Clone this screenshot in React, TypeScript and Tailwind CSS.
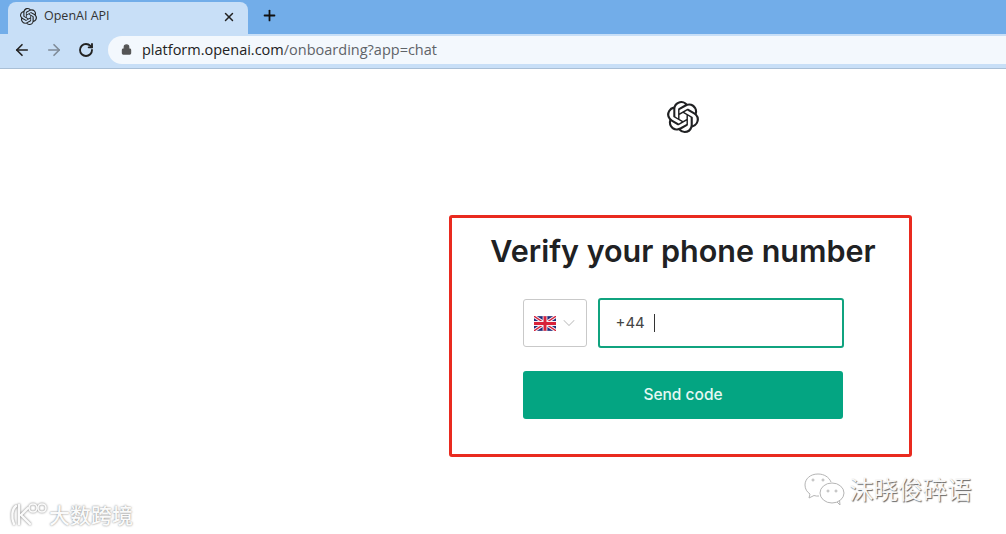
import React from 'react';
import { ArrowLeft, ArrowRight, RotateCw, Lock, X, Plus, ChevronDown } from 'lucide-react';
import { SiOpenai } from 'react-icons/si';

function UkFlag() {
  return (
    <svg width="22" height="15" viewBox="0 0 60 40" className="shrink-0">
      <rect width="60" height="40" fill="#1f2a7a" />
      <path d="M0 0L60 40M60 0L0 40" stroke="#f4eef4" strokeWidth="9" />
      <path d="M0 0L60 40M60 0L0 40" stroke="#d8213a" strokeWidth="3.5" />
      <path d="M30 0V40M0 20H60" stroke="#f4eef4" strokeWidth="13" />
      <path d="M30 0V40M0 20H60" stroke="#d8213a" strokeWidth="8" />
    </svg>
  );
}

function WechatBubbles() {
  return (
    <svg width="42" height="36" viewBox="0 0 42 36" fill="none" stroke="#b5b5b5" strokeWidth="1">
      <path d="M15 3C7 3 2 8 2 14c0 4 2 7 5 9l-1 4 5-2.500c2 .6 3 .7 5 .5" />
      <path d="M15 3c6 0 11 3 13 8" />
      <ellipse cx="29" cy="22" rx="12" ry="10" />
      <path d="M34 31l3 3-.5-5" />
      <circle cx="10" cy="9" r="1" />
      <circle cx="20" cy="9" r="1" />
      <circle cx="25" cy="20" r="1" />
      <circle cx="33" cy="20" r="1" />
    </svg>
  );
}

function KooLogo() {
  return (
    <svg width="38" height="26" viewBox="0 0 38 26" fill="none" className="drop-shadow-[0_0_1px_#777]">
      <g stroke="#fbfbfb" strokeWidth="2.4" strokeLinecap="round">
        <path d="M7 5C3 8 2 16 5 23" />
        <path d="M10 4v19" />
        <path d="M19 7l-7 7 9 9" />
        <circle cx="24" cy="7" r="4" strokeWidth="1.6" />
        <circle cx="33" cy="7" r="4" strokeWidth="1.6" />
      </g>
    </svg>
  );
}

export default function App() {
  return (
    <div className="relative h-[534px] w-[1006px] overflow-hidden bg-white font-['Liberation_Sans',sans-serif]">
      {/* Browser chrome */}
      <div className="flex h-[34px] items-end bg-[#72ade9] pl-2">
        <div className="flex h-[32px] w-[240px] items-center rounded-t-lg bg-[#c8dff7] pb-[3px] pl-3 pr-3">
          <SiOpenai className="h-[17px] w-[17px] text-[#222]" />
          <span className="ml-[7px] font-['Open_Sans',sans-serif] text-[12.5px] text-[#333]">OpenAI API</span>
          <X className="ml-auto h-[14px] w-[14px] text-[#222]" strokeWidth={2.5} />
        </div>
        <Plus className="mb-[10px] ml-[13px] h-[17px] w-[17px] text-[#111]" strokeWidth={2.5} />
      </div>
      <div className="flex h-[35px] items-center border-b border-[#a9bfd6] bg-[#c8dff7] pb-[3px] pl-[13px]">
        <ArrowLeft className="h-[18px] w-[18px] text-[#222]" strokeWidth={2.2} />
        <ArrowRight className="ml-[14px] h-[18px] w-[18px] text-[#7f8b98]" strokeWidth={2.2} />
        <RotateCw className="ml-[15px] h-[16px] w-[16px] text-[#222]" strokeWidth={2.8} />
        <div className="ml-[14px] flex h-[28px] flex-1 items-center rounded-l-full bg-[#f3f8fd] pl-[13px]">
          <Lock className="h-[11px] w-[11px] fill-[#555] text-[#555]" strokeWidth={2.5} />
          <span className="ml-[10px] font-['Open_Sans',sans-serif] text-[14.5px] text-[#5f6368]">
            <span className="text-[#222]">platform.openai.com</span>/onboarding?app=chat
          </span>
        </div>
      </div>

      {/* Page */}
      <main className="flex flex-col items-center pl-[360px] pt-[32px]">
        <SiOpenai className="h-[32px] w-[32px] text-[#202123]" />
        <section className="mr-[5px] mt-[82px] flex h-[242px] w-[463px] flex-col items-center rounded-[3px] border-[3px] border-[#e92a1f] pl-[5px] pt-[15px]">
          <h1 className="whitespace-nowrap font-['Inter',sans-serif] text-[30.5px] font-semibold leading-[36px] text-[#202123]">
            Verify your phone number
          </h1>
          <div className="mt-[29px] flex w-[321px] items-center gap-[11px]">
            <button className="flex h-[48px] w-[64px] items-center gap-[3px] rounded-[3px] border border-[#c9c9c9] bg-white pl-[10px]">
              <UkFlag />
              <ChevronDown className="h-[20px] w-[20px] text-[#c4c4c4]" strokeWidth={1.25} />
            </button>
            <div className="flex h-[50px] flex-1 items-center rounded-[3px] border-2 border-[#10a37f] pl-[16px]">
              <span className="font-['Inter',sans-serif] text-[15px] text-[#444]">+44</span>
              <span className="ml-[9px] h-[18px] w-px bg-[#333]" />
            </div>
          </div>
          <button className="mr-[1px] mt-[23px] h-[48px] w-[320px] rounded-[3px] bg-[#04a582] pl-[1px] font-['Inter',sans-serif] text-[15.5px] font-medium text-[#e6f8f2]">
            Send code
          </button>
        </section>
      </main>

      {/* Watermarks */}
      <div className="absolute left-[9px] top-[500px] flex items-center gap-[2px]">
        <KooLogo />
        <span className="font-['Noto_Sans_CJK_SC',sans-serif] text-[21px] font-medium leading-[28px] text-[#fafafa] [text-shadow:0_0_2px_#777]">
          大数跨境
        </span>
      </div>
      <div className="absolute left-[803px] top-[471px] flex items-center gap-[4px]">
        <WechatBubbles />
        <span className="font-['Noto_Sans_CJK_SC',sans-serif] text-[24.5px] leading-[36px] text-[#f7f7f7] [text-shadow:1px_1px_1px_#666]">
          沫晓俊碎语
        </span>
      </div>
    </div>
  );
}
